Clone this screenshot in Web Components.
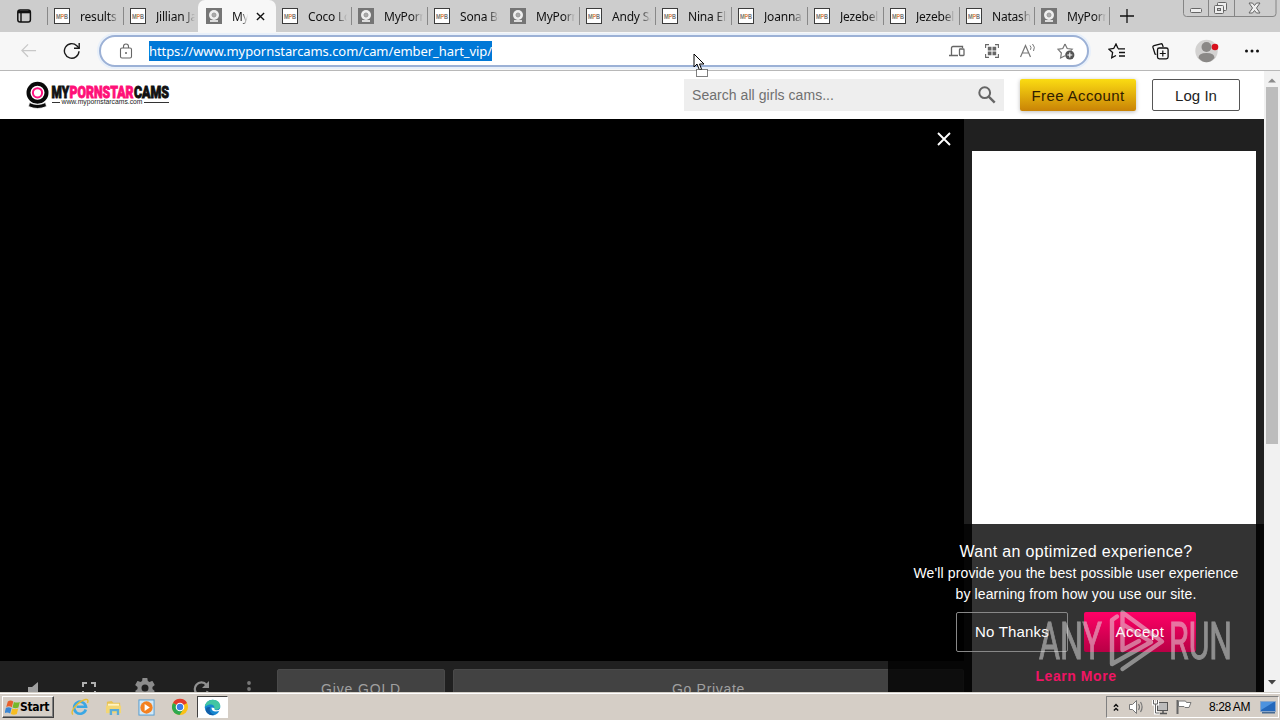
<!DOCTYPE html>
<html lang="en">
<head>
<meta charset="utf-8">
<title>Browser desktop</title>
<style>
    body { margin: 0; width: 1280px; height: 720px; overflow: hidden; background: #000; }
</style>
</head>
<body>
<desktop-screen></desktop-screen>

<script>
// Icon drawings: [viewBox, markup]
const icons = {
    panel: ['0 0 16 16', '<rect x="1.8" y="2" width="12.6" height="12" rx="2.3" fill="none" stroke="#111" stroke-width="1.5"/><path d="M2 4h12" stroke="#111" stroke-width="2.600"/><path d="M5 5v9" stroke="#111" stroke-width="1.400"/>'],
    close: ['0 0 10 10', '<path d="M1 1l8 8M9 1L1 9" stroke="#111" stroke-width="1.5"/>'],
    plus: ['0 0 14 14', '<path d="M7 0v14M0 7h14" stroke="#111" stroke-width="1.3"/>'],
    back: ['0 0 18 16', '<path d="M17 8H2M8.5 1.5L2 8l6.500 6.500" fill="none" stroke="#c8c8c8" stroke-width="1.3"/>'],
    reload: ['0 0 18 18', '<path d="M16 9.300A7.300 7.300 0 1 1 13.800 3.700L16 6" fill="none" stroke="#1a1a1a" stroke-width="1.4"/><path d="M16.200 1v5.300H11" fill="none" stroke="#1a1a1a" stroke-width="1.4"/>'],
    lock: ['0 0 14 16', '<rect x="1.500" y="5" width="11" height="10" rx="1.500" fill="none" stroke="#666" stroke-width="1.1"/><path d="M4.500 5V3.500a2.500 2.500 0 0 1 5 0V5" fill="none" stroke="#666" stroke-width="1.1"/><circle cx="7" cy="10" r="1" fill="#666"/>'],
    devices: ['0 0 16 14', '<path d="M9 11.500H0M2.500 11V4q0-1.500 1.500-1.500H13.500V4" fill="none" stroke="#666" stroke-width="1.3"/><rect x="10.500" y="5" width="4.500" height="6.500" rx=".7" fill="none" stroke="#666" stroke-width="1.3"/>'],
    apps: ['0 0 14 14', '<path d="M.6 4V.6H4M10 .6h3.400V4M13.400 10v3.400H10M4 13.400H.6V10" fill="none" stroke="#666" stroke-width="1.100"/><path d="M2.800 2.800h3.700v3.700H2.800zM7.500 2.800h3.700v3.700H7.500zM2.800 7.500h3.700v3.700H2.800zM7.500 7.500h3.700v3.700H7.500z" fill="#666"/>'],
    read: ['0 0 18 16', '<path d="M1.500 14L6.500 2.500 11.500 14M3.300 10h6.500" fill="none" stroke="#777" stroke-width="1.200"/><path d="M11 2.500q1.800 1.700.5 4.300M13.500 1q3.200 3 1 7" fill="none" stroke="#777" stroke-width="1"/>'],
    staradd: ['0 0 18 17', '<path d="M8 1l2.200 4.500 5 .700-1.500 1.500M8 12.800l-4.400 2.200.8-5L1 6.300l4.800-.8L8 1" fill="none" stroke="#777" stroke-width="1.200"/><circle cx="12.800" cy="12" r="4.600" fill="#555"/><path d="M12.800 9.500v5M10.300 12h5" stroke="#fff" stroke-width="1.100"/>'],
    favs: ['0 0 18 16', '<path d="M10 5.500L8 1 5.700 5.500 1 6.200l3.600 3.400-.9 5.200L8 12.500M10 5.800h7M11 9.500h6M11 13h6" fill="none" stroke="#111" stroke-width="1.300"/>'],
    collections: ['0 0 17 17', '<path d="M4.300 11.500L3 11 .9 4.200Q.7 3 2 2.600L8.800.8q1.200-.2 1.600.8l.8 2.400" fill="none" stroke="#111" stroke-width="1.300"/><rect x="5.500" y="5" width="10.600" height="10.800" rx="1.800" fill="none" stroke="#111" stroke-width="1.300"/><path d="M10.800 7.500v6M7.800 10.500h6" stroke="#111" stroke-width="1.200"/>'],
    profile: ['0 0 24 24', '<circle cx="11.500" cy="12" r="11.200" fill="#d3d2d1"/><circle cx="11.500" cy="8" r="5" fill="#8a8886"/><path d="M3.500 19q0-5 8-5t8 5q-3.500 4.200-8 4.200T3.500 19" fill="#8a8886"/><circle cx="20" cy="8" r="3.300" fill="#d8101c"/>'],
    dots: ['0 0 14 4', '<circle cx="1.500" cy="2" r="1.500" fill="#111"/><circle cx="7" cy="2" r="1.500" fill="#111"/><circle cx="12.500" cy="2" r="1.500" fill="#111"/>'],
    search: ['0 0 18 18', '<circle cx="6.700" cy="6.700" r="5.400" fill="none" stroke="#666" stroke-width="2"/><path d="M10.700 10.700l6 6" stroke="#666" stroke-width="2.400"/>'],
    cam: ['0 0 24 28', '<circle cx="11.500" cy="11.800" r="11" fill="#0a0a0a"/><circle cx="11.500" cy="11.800" r="7" fill="#fff"/><circle cx="11.500" cy="11.800" r="4.600" fill="#fff" stroke="#ff1482" stroke-width="2"/><path d="M3.500 21.500q8 4 16 0l1 4q-9 4-18 0z" fill="#0a0a0a" stroke="#fff" stroke-width=".8"/>'],
    whitex: ['0 0 14 14', '<path d="M1 1l12 12M13 1L1 13" stroke="#fff" stroke-width="1.900"/>'],
    speaker: ['0 0 12 15', '<path d="M0 5h4l6-5v15l-6-5H0z" fill="#a0a0a0"/>'],
    full: ['0 0 14 14', '<path d="M1 5V1h4M9 1h4v4M13 9v4H9M5 13H1V9" fill="none" stroke="#b0b0b0" stroke-width="2"/>'],
    gear: ['0 0 24 24', '<path fill="#8c8c8c" d="M19.400 13c.1-.3.1-.7.1-1s0-.7-.1-1l2.100-1.700c.2-.1.3-.4.1-.6l-2-3.500c-.1-.2-.4-.3-.6-.2l-2.500 1c-.5-.4-1.100-.7-1.700-1L14.400 2.400c0-.2-.2-.4-.5-.4h-4c-.3 0-.5.200-.5.400L9.100 5c-.6.3-1.200.6-1.700 1l-2.500-1c-.2-.1-.5 0-.6.2l-2 3.500c-.1.2-.1.5.1.6L4.600 11c-.1.300-.1.700-.1 1s0 .7.1 1l-2.200 1.700c-.2.100-.2.400-.1.600l2 3.500c.1.200.4.300.6.200l2.500-1c.5.400 1.100.7 1.700 1l.3 2.600c0 .2.2.4.5.4h4c.3 0 .5-.2.500-.4l.4-2.600c.6-.3 1.200-.6 1.700-1l2.500 1c.2.100.5 0 .6-.2l2-3.500c.1-.2.1-.5-.1-.6zM12 15.500a3.500 3.500 0 1 1 0-7 3.500 3.500 0 0 1 0 7z"/>'],
    refresh: ['0 0 18 18', '<path d="M14.500 5A6.500 6.500 0 1 0 15.500 11" fill="none" stroke="#909090" stroke-width="2.200"/><path d="M17 1v7h-7z" fill="#909090"/>'],
    more: ['0 0 4 16', '<circle cx="2" cy="2" r="1.900" fill="#777"/><circle cx="2" cy="8" r="1.900" fill="#777"/><circle cx="2" cy="14" r="1.900" fill="#777"/>'],
    up: ['0 0 8 5', '<path d="M0 4.500L4 .5l4 4z" fill="#8a8a8a"/>'],
    down: ['0 0 8 5', '<path d="M0 0h8L4 4.500z" fill="#444"/>'],
    windows: ['0 0 16 16', '<path d="M3 1.500q3-2 5.800 0L7.300 7.700Q4.500 6 1.300 7.500z" fill="#e8602c"/><path d="M9.500 2q3 1.300 6.300 0L14.300 8q-3 1.500-6.300 0z" fill="#76b82a"/><path d="M1 8.300Q4 7 7 8.500L5.500 14.500Q2.500 12.500-.5 14z" fill="#3a86d4"/><path d="M7.700 9q3 1.400 6.400 0l-1.500 6q-3 1.300-6.400 0z" fill="#f7bd22"/>'],
    ie: ['0 0 18 18', '<path d="M14.800 11.500A6 6 0 1 1 15 8.800H5.500" fill="none" stroke="#3aa7e4" stroke-width="2.600"/><path d="M2 16.500C-2 13 8 3 14.500 1.500q3.500-.6 2 3.500" fill="none" stroke="#e8bd32" stroke-width="1.400"/>'],
    folder: ['0 0 18 18', '<path d="M2 3l5-1 2 2h7v10H2z" fill="#e8c252"/><path d="M3 5h12v3H3z" fill="#fff4c4"/><path d="M1 7h16v8H1z" fill="#f3d674"/><path d="M5 17v-6.500h10V17h-2.500v-4h-5v4z" fill="#5aabd8"/>'],
    media: ['0 0 18 18', '<rect x="1" y="1" width="16" height="16" fill="#d3e9f8" stroke="#519bd0"/><circle cx="9" cy="9" r="6.500" fill="#f48120"/><path d="M7 5.300v7.400L12.500 9z" fill="#fff"/>'],
    chrome: ['0 0 18 18', '<circle cx="9" cy="9" r="8" fill="#fbc116"/><path d="M9 9L2 5a8 8 0 0 1 14 0z" fill="#e33b2e"/><path d="M9 9L2 5a8 8 0 0 0 6.500 12l4-6z" fill="#2da94f"/><circle cx="9" cy="9" r="4.300" fill="#fff"/><circle cx="9" cy="9" r="3.200" fill="#3d7de8"/>'],
    edge: ['0 0 18 18', '<circle cx="9" cy="9" r="8.200" fill="#1687d0"/><path d="M1 8Q2.200.8 9.500.8c5 0 8 3.400 7.700 7 0 2.300-2 3.700-4.500 3.700-2 0-2.700-.8-1.900-1.900C12 6.500 7 3.600 1 8z" fill="#42c6a2"/><path d="M6.300 8.500q-1.500 6.500 5 8.400Q4.500 18 2 12.700 1.500 8 6.300 8.500z" fill="#115ea8"/><path d="M8 9q-.5 5.500 8.300 3.800 1-.7 1.700-1.900v-2q-1.500 2.900-5 2.900-2.800-.4-2-2.400z" fill="#fff"/>'],
    chev: ['0 0 7 10', '<path d="M1 4.300l2.500-2.500L6 4.300M1 8.800l2.500-2.500L6 8.800" fill="none" stroke="#111" stroke-width="1.600"/>'],
    volume: ['0 0 17 16', '<path d="M1.500 5.500h3L8.500 1.500v13l-4-4h-3z" fill="#fff" stroke="#777"/><path d="M10.500 5q2 3 0 6M12.500 3q3.200 5 0 10" fill="none" stroke="#777" stroke-width="1.200"/>'],
    network: ['0 0 17 16', '<rect x="5.500" y="3.500" width="10" height="8" fill="#bbb" stroke="#555"/><path d="M8 14.500h7M11 12v2" stroke="#555" stroke-width="1.500"/><path d="M1.500 1v4h4V1M3.500 5v9h4" fill="none" stroke="#fff" stroke-width="3"/><path d="M1.500 1v4h4V1M3.500 5v9h4" fill="none" stroke="#666"/>'],
    flag: ['0 0 16 16', '<path d="M1.500 1v14" stroke="#666" stroke-width="2"/><path d="M2.500 2h7l1 1.500h4.500l-2 5H9L8 7.500H2.500z" fill="#fff" stroke="#777"/>'],
    screen: ['0 0 16 15', '<path d="M.5 1.500h15v10H.5z" fill="#2468bb" stroke="#8aa6c8"/><path d="M1 10L14 2H1z" fill="#4d93df"/><path d="M2 12h13v1.500H2z" fill="#476a91"/>'],
    cursor: ['0 0 18 24', '<path d="M1 1v13l3-3 2.200 5.500h2.500L6.500 11H11z" fill="#fff" stroke="#000"/><rect x="3.500" y="16.500" width="11" height="7" fill="#fff" stroke="#000" stroke-dasharray="1 1"/>'],
    windowbtns: ['0 0 94 17', '<path d="M.5 0v13.500q0 3 3 3H90q3 0 3-3V0M25.500 0v16M51.500 0v16" fill="none" stroke="#858585"/><rect x="7.500" y="8.500" width="11" height="4" rx="1" fill="#eee" stroke="#666"/><rect x="34.500" y="2.500" width="9" height="8" rx="1" fill="#eee" stroke="#666"/><rect x="31.500" y="5.500" width="9" height="8" rx="1" fill="#eee" stroke="#666"/><rect x="34.500" y="8.500" width="3" height="2" fill="#ccc" stroke="#666"/><path d="M66 3h3.500l2 2.500 2-2.500H77l-3.500 5 3.500 5h-3.500l-2-2.500-2 2.500H66l3.500-5z" fill="#eee" stroke="#666"/>']
};

class UiIcon extends HTMLElement {
    constructor() {
        super();
        this.attachShadow({ mode: 'open' });
    }

    connectedCallback() {
        const [box, art] = icons[this.getAttribute('name')];
        const [, , w, h] = box.split(' ');
        const width = this.getAttribute('w') || w;
        this.shadowRoot.innerHTML = `
            <style>
                :host { display: block; flex: none; width: ${width}px; }
                svg { display: block; }
            </style>
            <svg width="${width}" height="${width * h / w}" viewBox="${box}">${art}</svg>
        `;
    }
}
customElements.define('ui-icon', UiIcon);

// One line of text, letter-spaced to fill the width in "w"
class FitText extends HTMLElement {
    constructor() {
        super();
        this.attachShadow({ mode: 'open' });
        this.shadowRoot.innerHTML = `
            <style>
                :host { display: block; flex: none; white-space: nowrap; }
                span { display: inline-block; }
            </style>
            <span><slot></slot></span>
        `;
    }

    connectedCallback() {
        const span = this.shadowRoot.querySelector('span');
        const w = Number(this.getAttribute('w'));
        const natural = span.getBoundingClientRect().width;
        this.style.width = w + 'px';
        span.style.letterSpacing = (w - natural) / this.textContent.length + 'px';
    }
}
customElements.define('fit-text', FitText);

class BrowserTab extends HTMLElement {
    constructor() {
        super();
        this.attachShadow({ mode: 'open' });
    }

    connectedCallback() {
        const active = this.hasAttribute('active');
        const icon = this.getAttribute('icon') === 'cam'
            ? '<rect width="16" height="16" fill="#757575"/><circle cx="8" cy="7" r="5" fill="#eee"/><circle cx="8" cy="7" r="2" fill="#aaa" stroke="#999"/><path d="M4 12h8v2H4z" fill="#ddd"/>'
            : '<rect x=".5" y=".5" width="15" height="15" fill="#fff" stroke="#3c3c3c"/><text x="2" y="11" font-family="Liberation Sans" font-size="8" font-weight="bold" textLength="12" lengthAdjust="spacingAndGlyphs"><tspan fill="#777">M</tspan><tspan fill="#e58b43">P</tspan><tspan fill="#777">B</tspan></text>';
        this.shadowRoot.innerHTML = `
            <style>
                :host {
                    display: flex;
                    flex: none;
                    align-items: center;
                    box-sizing: border-box;
                    width: var(--tab-width, 76px);
                    height: 32px;
                    padding-left: 6px;
                    font: 12px "Noto Sans", sans-serif;
                    letter-spacing: -.2px;
                    color: #111;
                    background: linear-gradient(#888, #888) right 7px / 1px 18px no-repeat;
                }
                :host([noline]) { background: none; }
                :host([active]) { width: 78px; margin-left: -2px; padding-left: 8px; background: #f7f7f7; border-radius: 7px 7px 0 0; }
                svg { flex: none; }
                .title {
                    width: ${active ? 16 : 39}px;
                    margin-left: 10px;
                    overflow: hidden;
                    white-space: nowrap;
                    -webkit-mask-image: linear-gradient(90deg, #000 ${active ? 55 : 72}%, transparent);
                }
                ui-icon { margin-left: 8px; }
            </style>
            <svg width="16" height="16">${icon}</svg>
            <div class="title"><slot></slot></div>
            ${active ? '<ui-icon name="close" w="9"></ui-icon>' : ''}
        `;
    }
}
customElements.define('browser-tab', BrowserTab);

class BrowserChrome extends HTMLElement {
    constructor() {
        super();
        this.attachShadow({ mode: 'open' });
        this.shadowRoot.innerHTML = `
            <style>
                :host { display: block; height: 71px; background: #f7f7f7; }
                .tabs { display: flex; height: 32px; background: #cdcdcd; }
                .first { width: 48px; box-sizing: border-box; padding: 8px 0 0 16px; background: linear-gradient(#888, #888) right 7px / 1px 18px no-repeat; }
                .short { --tab-width: 75px; }
                .new { margin: 9px 0 0 10px; }
                .win { margin-left: auto; margin-right: 3px; }
                .bar { display: flex; align-items: center; height: 38px; border-bottom: 1px solid #b8b8b8; }
                .back { margin-left: 20px; }
                .reload { margin-left: 26px; }
                .address {
                    display: flex;
                    align-items: center;
                    box-sizing: border-box;
                    width: 990px;
                    height: 32px;
                    margin-left: 18px;
                    padding-left: 18px;
                    border: 2px solid #9cb1d6;
                    border-radius: 16px;
                    box-shadow: 0 0 0 2px #e8f0fa;
                    background: #fff;
                }
                .url { margin-left: 16px; height: 20px; background: #0078d7; color: #fff; font: 13px/20px "Noto Sans", sans-serif; }
                .tools { display: flex; align-items: center; margin-left: auto; gap: 20px; padding-right: 12px; }
                .right { display: flex; align-items: center; gap: 26px; margin-left: 19px; }
            </style>
            <div class="tabs">
                <div class="first"><ui-icon name="panel"></ui-icon></div>
                <browser-tab>results for</browser-tab>
                <browser-tab noline>Jillian Jan</browser-tab>
                <browser-tab icon="cam" active>MyPorn</browser-tab>
                <browser-tab>Coco Lov</browser-tab>
                <browser-tab icon="cam">MyPornS</browser-tab>
                <browser-tab noline>Sona Bel</browser-tab>
                <browser-tab icon="cam">MyPornS</browser-tab>
                <browser-tab>Andy Sa</browser-tab>
                <browser-tab>Nina Elle</browser-tab>
                <browser-tab>Joanna A</browser-tab>
                <browser-tab>Jezebelle</browser-tab>
                <browser-tab>Jezebelle</browser-tab>
                <browser-tab class="short">Natasha</browser-tab>
                <browser-tab class="short" icon="cam">MyPornS</browser-tab>
                <ui-icon class="new" name="plus"></ui-icon>
                <ui-icon class="win" name="windowbtns"></ui-icon>
            </div>
            <div class="bar">
                <ui-icon class="back" name="back" w="17"></ui-icon>
                <ui-icon class="reload" name="reload"></ui-icon>
                <div class="address">
                    <ui-icon name="lock"></ui-icon>
                    <fit-text class="url" w="343">https://www.mypornstarcams.com/cam/ember_hart_vip/</fit-text>
                    <div class="tools">
                        <ui-icon name="devices"></ui-icon>
                        <ui-icon name="apps"></ui-icon>
                        <ui-icon name="read"></ui-icon>
                        <ui-icon name="staradd" w="18"></ui-icon>
                    </div>
                </div>
                <div class="right">
                    <ui-icon name="favs"></ui-icon>
                    <ui-icon name="collections"></ui-icon>
                    <ui-icon name="profile"></ui-icon>
                    <ui-icon name="dots"></ui-icon>
                </div>
            </div>
        `;
    }
}
customElements.define('browser-chrome', BrowserChrome);

class SiteHeader extends HTMLElement {
    constructor() {
        super();
        this.attachShadow({ mode: 'open' });
        this.shadowRoot.innerHTML = `
            <style>
                :host {
                    display: flex;
                    align-items: center;
                    box-sizing: border-box;
                    height: 48px;
                    padding: 0 24px 0 26px;
                    background: #fff;
                    font: 15px "Liberation Sans", Arial, sans-serif;
                }
                .logo { display: block; margin-left: 1px; }
                .search {
                    display: flex;
                    align-items: center;
                    justify-content: space-between;
                    box-sizing: border-box;
                    width: 320px;
                    height: 32px;
                    margin-left: auto;
                    padding: 0 8px;
                    background: #eee;
                    color: #707070;
                    font-size: 14px;
                }
                .btn { display: flex; align-items: center; justify-content: center; box-sizing: border-box; height: 32px; margin-left: 16px; border-radius: 2px; }
                .gold { width: 116px; background: linear-gradient(#fbdc12, #c98306); color: #302000; box-shadow: 0 1px 4px #0004; }
                .login { width: 88px; border: 1px solid #555; color: #222; }
            </style>
            <ui-icon name="cam"></ui-icon>
            <svg class="logo" width="119" height="28">
                <g font-family="Roboto, sans-serif" font-weight="900" font-size="16" stroke-width=".9">
                    <text x="0.500" y="16.500" textLength="17.500" lengthAdjust="spacingAndGlyphs" fill="#111" stroke="#111">MY</text>
                    <text x="18.500" y="16.500" textLength="64" lengthAdjust="spacingAndGlyphs" fill="#ff1078" stroke="#ff1078">PORNSTAR</text>
                    <text x="83" y="16.500" textLength="35" lengthAdjust="spacingAndGlyphs" fill="#111" stroke="#111">CAMS</text>
                </g>
                <path d="M1 21.500h8M93 21.500h25" stroke="#333"/>
                <text x="10.500" y="23" font-family="Liberation Sans" font-size="8" fill="#222" textLength="81" lengthAdjust="spacingAndGlyphs">www.mypornstarcams.com</text>
            </svg>
            <div class="search"><fit-text w="142">Search all girls cams...</fit-text><ui-icon name="search"></ui-icon></div>
            <div class="btn gold"><fit-text w="93">Free Account</fit-text></div>
            <div class="btn login"><fit-text w="42">Log In</fit-text></div>
        `;
    }
}
customElements.define('site-header', SiteHeader);

class CamRoom extends HTMLElement {
    constructor() {
        super();
        this.attachShadow({ mode: 'open' });
        this.shadowRoot.innerHTML = `
            <style>
                :host { display: flex; height: 573px; background: #202020; overflow: hidden; }
                .player { width: 964px; }
                .video { display: flex; justify-content: flex-end; box-sizing: border-box; height: 542px; padding: 13px 13px 0 0; background: #000; }
                .controls { display: flex; height: 31px; overflow: hidden; padding-left: 28px; font: 14px "Liberation Sans", Arial, sans-serif; color: #a0a0a0; }
                .controls ui-icon { margin-top: 21px; }
                .controls ui-icon.gear { margin: 15px 0 0 37px; }
                .b { display: flex; justify-content: center; height: 40px; box-sizing: border-box; padding-top: 11px; margin-top: 8px; background: #424242; border: 1px solid #4a4a4a; border-radius: 2px; }
                .chat { width: 284px; margin: 32px 0 0 8px; background: #fff; }
            </style>
            <div class="player">
                <div class="video"><ui-icon name="whitex"></ui-icon></div>
                <div class="controls">
                    <ui-icon name="speaker" w="12"></ui-icon>
                    <ui-icon name="full" style="margin-left: 42px"></ui-icon>
                    <ui-icon class="gear" name="gear"></ui-icon>
                    <ui-icon name="refresh" style="margin: 19px 0 0 35px"></ui-icon>
                    <ui-icon name="more" style="margin: 20px 0 0 37px"></ui-icon>
                    <div class="b" style="width: 168px; margin-left: 26px"><fit-text w="80">Give GOLD</fit-text></div>
                    <div class="b" style="width: 511px; margin-left: 8px"><fit-text w="73">Go Private</fit-text></div>
                </div>
            </div>
            <div class="chat"></div>
        `;
    }
}
customElements.define('cam-room', CamRoom);

class ConsentBanner extends HTMLElement {
    constructor() {
        super();
        this.attachShadow({ mode: 'open' });
        this.shadowRoot.innerHTML = `
            <style>
                :host {
                    display: flex;
                    flex-direction: column;
                    align-items: center;
                    box-sizing: border-box;
                    width: 376px;
                    height: 168px;
                    padding-top: 17px;
                    background: rgba(0, 0, 0, .8);
                    color: #fff;
                    font: 14px/21px "Liberation Sans", Arial, sans-serif;
                }
                .title { font-size: 16px; line-height: 22px; }
                .row { display: flex; gap: 16px; margin-top: 7px; }
                .btn { display: flex; align-items: center; justify-content: center; box-sizing: border-box; width: 112px; height: 40px; padding-bottom: 2px; border: 1px solid #888; border-radius: 2px; font-size: 15px; }
                .yes { border: 0; background: linear-gradient(#ff0066, #b80045); }
                .more { margin-top: 14px; color: #f01464; font-weight: bold; }
            </style>
            <fit-text class="title" w="233">Want an optimized experience?</fit-text>
            <fit-text w="325">We'll provide you the best possible user experience</fit-text>
            <fit-text w="241">by learning from how you use our site.</fit-text>
            <div class="row">
                <div class="btn"><fit-text w="74">No Thanks</fit-text></div>
                <div class="btn yes"><fit-text w="49">Accept</fit-text></div>
            </div>
            <fit-text class="more" w="81">Learn More</fit-text>
        `;
    }
}
customElements.define('consent-banner', ConsentBanner);

class RunWatermark extends HTMLElement {
    constructor() {
        super();
        this.attachShadow({ mode: 'open' });
        this.shadowRoot.innerHTML = `
            <style>
                :host { display: block; opacity: .5; }
                svg { display: block; }
            </style>
            <svg width="196" height="66" font-family="Roboto, sans-serif" font-size="52" fill="#e8e8e8">
                <g stroke="#e8e8e8" stroke-width="1">
                    <text x="1" y="51" textLength="63" lengthAdjust="spacingAndGlyphs">ANY</text>
                    <text x="131" y="51" textLength="63" lengthAdjust="spacingAndGlyphs">RUN</text>
                </g>
                <path d="M79 8.500L74 12V56L113 34 86 17M84.500 42V4.500L124 33.500 84.500 61M84.500 42L101 33" fill="none" stroke="#e8e8e8" stroke-width="4.400" stroke-linejoin="round" stroke-linecap="round"/>
            </svg>
        `;
    }
}
customElements.define('run-watermark', RunWatermark);

class TaskBar extends HTMLElement {
    constructor() {
        super();
        this.attachShadow({ mode: 'open' });
        this.shadowRoot.innerHTML = `
            <style>
                :host {
                    display: flex;
                    align-items: center;
                    box-sizing: border-box;
                    height: 28px;
                    padding: 2px 0 0 2px;
                    background: linear-gradient(#d4d0c8 1px, #fff 1px, #fff 2px, #d5cec6 2px);
                    font: 12px "DejaVu Sans Condensed", "DejaVu Sans", sans-serif;
                    color: #000;
                }
                .start {
                    display: flex;
                    align-items: center;
                    box-sizing: border-box;
                    width: 52px;
                    height: 22px;
                    padding-left: 2px;
                    gap: 0;
                    border: 1px solid;
                    border-color: #fff #404040 #404040 #fff;
                    box-shadow: inset -1px -1px #808080;
                    font-weight: bold;
                }
                .apps { display: flex; align-items: center; gap: 16px; margin-left: 17px; }
                .on { display: flex; align-items: center; justify-content: center; box-sizing: border-box; width: 31px; height: 22px; margin-left: 8px; background: #fff; border: 1px solid; border-color: #404040 #fff #fff #404040; }
                .tray { display: flex; align-items: center; box-sizing: border-box; width: 173px; height: 22px; margin: 0 1px 0 auto; padding-left: 6px; border: 1px solid; border-color: #808080 #fff #fff #808080; font-family: "Liberation Sans", sans-serif; }
            </style>
            <div class="start"><ui-icon name="windows" w="15"></ui-icon><fit-text w="29">Start</fit-text></div>
            <div class="apps">
                <ui-icon name="ie" w="18"></ui-icon>
                <ui-icon name="folder" w="17"></ui-icon>
                <ui-icon name="media" w="17"></ui-icon>
                <ui-icon name="chrome" w="18"></ui-icon>
            </div>
            <div class="on"><ui-icon name="edge" w="17"></ui-icon></div>
            <div class="tray">
                <ui-icon name="chev" style="margin-right: 9px" w="6"></ui-icon>
                <ui-icon name="volume" style="margin-right: 7px"></ui-icon>
                <ui-icon name="network" style="margin-right: 7px"></ui-icon>
                <ui-icon name="flag" style="margin-right: 17px"></ui-icon>
                <fit-text w="41">8:28 AM</fit-text>
                <ui-icon name="screen" style="margin-left: 10px"></ui-icon>
            </div>
        `;
    }
}
customElements.define('task-bar', TaskBar);

class DesktopScreen extends HTMLElement {
    constructor() {
        super();
        this.attachShadow({ mode: 'open' });
        this.shadowRoot.innerHTML = `
            <style>
                :host { display: block; position: relative; width: 1280px; height: 720px; overflow: hidden; }
                .view { display: flex; height: 621px; }
                .page { width: 1264px; }
                .scroll { display: flex; flex-direction: column; align-items: center; box-sizing: border-box; width: 16px; padding: 7px 0; background: #f1f1f1; }
                .thumb { width: 12px; height: 357px; margin-top: 4px; background: #bcbcbc; }
                .scroll ui-icon:last-child { margin-top: auto; }
                consent-banner { position: absolute; left: 888px; top: 524px; }
                run-watermark { position: absolute; left: 1038px; top: 608px; }
                .pointer { position: absolute; left: 693px; top: 53px; }
            </style>
            <browser-chrome></browser-chrome>
            <div class="view">
                <div class="page">
                    <site-header></site-header>
                    <cam-room></cam-room>
                </div>
                <div class="scroll">
                    <ui-icon name="up"></ui-icon>
                    <div class="thumb"></div>
                    <ui-icon name="down"></ui-icon>
                </div>
            </div>
            <task-bar></task-bar>
            <consent-banner></consent-banner>
            <run-watermark></run-watermark>
            <ui-icon class="pointer" name="cursor"></ui-icon>
        `;
    }
}
customElements.define('desktop-screen', DesktopScreen);
</script>
</body>
</html>
